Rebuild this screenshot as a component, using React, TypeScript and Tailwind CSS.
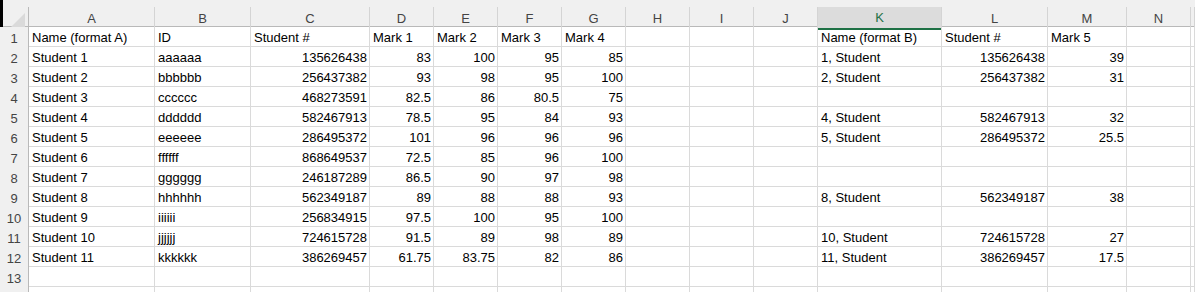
import React from 'react';

const COLS = ['A', 'B', 'C', 'D', 'E', 'F', 'G', 'H', 'I', 'J', 'K', 'L', 'M', 'N', ''];

// セルの値（数値は右寄せ）
type Cell = string | number | null;

const rows: Cell[][] = [
  ['Name (format A)', 'ID', 'Student #', 'Mark 1', 'Mark 2', 'Mark 3', 'Mark 4', null, null, null, 'Name (format B)', 'Student #', 'Mark 5', null, null],
  ['Student 1', 'aaaaaa', 135626438, 83, 100, 95, 85, null, null, null, '1, Student', 135626438, 39, null, null],
  ['Student 2', 'bbbbbb', 256437382, 93, 98, 95, 100, null, null, null, '2, Student', 256437382, 31, null, null],
  ['Student 3', 'cccccc', 468273591, 82.5, 86, 80.5, 75, null, null, null, null, null, null, null, null],
  ['Student 4', 'dddddd', 582467913, 78.5, 95, 84, 93, null, null, null, '4, Student', 582467913, 32, null, null],
  ['Student 5', 'eeeeee', 286495372, 101, 96, 96, 96, null, null, null, '5, Student', 286495372, 25.5, null, null],
  ['Student 6', 'ffffff', 868649537, 72.5, 85, 96, 100, null, null, null, null, null, null, null, null],
  ['Student 7', 'gggggg', 246187289, 86.5, 90, 97, 98, null, null, null, null, null, null, null, null],
  ['Student 8', 'hhhhhh', 562349187, 89, 88, 88, 93, null, null, null, '8, Student', 562349187, 38, null, null],
  ['Student 9', 'iiiiii', 256834915, 97.5, 100, 95, 100, null, null, null, null, null, null, null, null],
  ['Student 10', 'jjjjjj', 724615728, 91.5, 89, 98, 89, null, null, null, '10, Student', 724615728, 27, null, null],
  ['Student 11', 'kkkkkk', 386269457, 61.75, 83.75, 82, 86, null, null, null, '11, Student', 386269457, 17.5, null, null],
  [null, null, null, null, null, null, null, null, null, null, null, null, null, null, null],
  [null, null, null, null, null, null, null, null, null, null, null, null, null, null, null],
];

const grid =
  'grid grid-cols-[29px_126px_96px_119px_64px_64px_64px_64px_64px_64px_64px_124px_106px_79px_64px_1fr]';

const App = () => {
  return (
    <div
      className="h-[292px] w-[1195px] overflow-hidden bg-white text-[13px] text-black"
      style={{ fontFamily: '"Liberation Sans", Arial, sans-serif' }}
    >
      {/* 上部の余白（数式バーの下端） */}
      <div className="relative h-[7px] bg-[#f0f0f0]">
        <div className="absolute left-0 top-0 h-[27px] w-[3px] bg-black" />
      </div>

      {/* 列見出し */}
      <div className={`${grid} h-[20px] border-b border-[#b9b9b9] bg-[#f0f0f0] text-[#444]`}>
        <div className="relative border-r border-[#b9b9b9]">
          <div className="absolute bottom-[3px] right-[3px] h-0 w-0 border-b-[14px] border-l-[14px] border-b-[#dadada] border-l-transparent" />
        </div>
        {COLS.map((c, i) =>
          c === 'K' ? (
            <div
              key={i}
              className="flex items-center justify-center border-r border-[#d4d4d4] border-b-2 border-b-[#1e7145] bg-[#dcdcdc] pt-[1px] text-[#1e7145]"
            >
              {c}
            </div>
          ) : (
            <div key={i} className="flex items-center justify-center border-r border-[#d4d4d4] pt-[1px]">
              {c}
            </div>
          )
        )}
      </div>

      {/* データ行（14行目は下端で切れるので番号なし） */}
      {rows.map((row, r) => (
        <div key={r} className={`${grid} h-[20px] border-b border-[#dadada]`}>
          <div className="flex items-center justify-center border-r border-[#b9b9b9] bg-[#f0f0f0] pt-[2px] text-[#444]">
            {r < 13 ? r + 1 : null}
          </div>
          {row.map((v, c) => (
            <div
              key={c}
              className={`overflow-visible whitespace-nowrap border-r border-[#dadada] pt-[2px] leading-[18px] ${
                typeof v === 'number' ? 'pr-[2px] text-right' : 'pl-[3px]'
              }`}
            >
              {v}
            </div>
          ))}
        </div>
      ))}
    </div>
  );
};

export default App;
